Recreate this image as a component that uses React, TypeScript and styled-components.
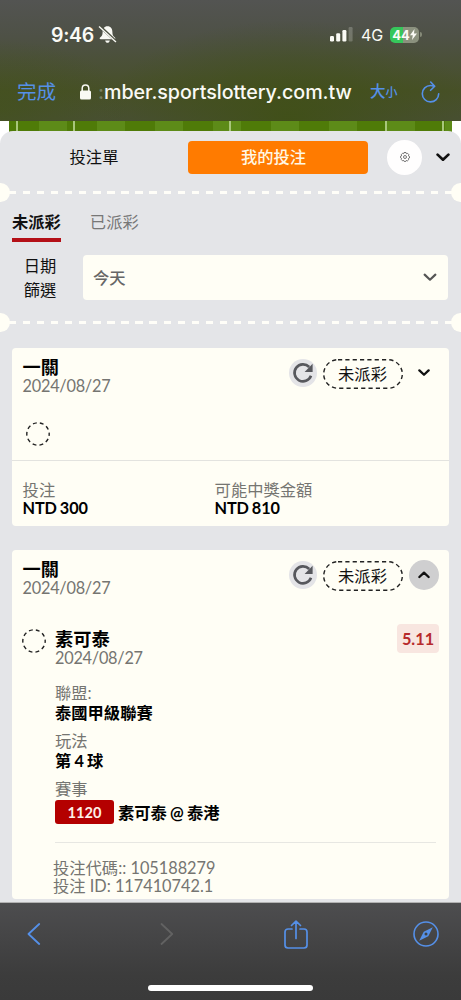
import React from "react";
import styled, { createGlobalStyle } from "styled-components";

const GlobalStyle = createGlobalStyle`
  * { box-sizing: border-box; }
  body { margin: 0; background: #e4e5e8; }
`;

const webFont = `Lato, "Noto Sans CJK TC", sans-serif`;
const systemFont = `Inter, "Noto Sans CJK TC", sans-serif`;

const Screen = styled.div`
  display: flex;
  flex-direction: column;
  width: 461px;
  height: 1000px;
  overflow: hidden;
  background: #e4e5e8;
  font-family: ${webFont};
  font-size: 16.3px;
  line-height: 20px;
  color: #111;
  white-space: nowrap;
  svg { display: block; flex: none; }
`;

/* Browser chrome */
const BrowserTop = styled.header`
  flex: none;
  height: 121px;
  font-family: ${systemFont};
  color: #fafaf5;
  background: radial-gradient(ellipse 190px 100px at 290px 120px, rgba(62, 80, 16, 0.75), transparent),
    radial-gradient(ellipse 130px 70px at 0 110px, rgba(66, 82, 24, 0.6), transparent),
    linear-gradient(#535452 0, #4e5146 30%, #475028 75%, #484f34 100%);
`;
const StatusBar = styled.div`
  display: flex;
  align-items: center;
  height: 69px;
  padding: 0 39px 0 51px;
`;
const Clock = styled.span`
  width: 47px;
  font-size: 19.5px;
  font-weight: 600;
  letter-spacing: -0.3px;
`;
const StatusIcons = styled.div`
  display: flex;
  align-items: center;
  margin-left: auto;
`;
const Network = styled.span`
  width: 29px;
  margin-left: 8px;
  font-size: 16px;
`;
const Battery = styled.div`
  display: flex;
  align-items: center;
  justify-content: center;
  width: 29px;
  height: 16px;
  border-radius: 5px;
  background: linear-gradient(90deg, #36c75b 45%, #8b917e 45%);
  font-size: 13px;
  font-weight: 700;
`;
const BatteryTip = styled.i`
  width: 2px;
  height: 5px;
  margin-left: 1px;
  border-radius: 0 2px 2px 0;
  background: #858a78;
`;
const AddressBar = styled.div`
  display: flex;
  align-items: center;
  height: 46px;
  padding: 0 21px 0 17px;
  color: #5590e8;
`;
const Done = styled.span`
  width: 63px;
  font-size: 19.5px;
`;
const Address = styled.span`
  width: 272px;
  margin-left: 7px;
  font-size: 19.7px;
  font-weight: 500;
  line-height: 26px;
  letter-spacing: -0.04px;
  color: #fafaf5;
`;
const Faded = styled.span`
  color: rgba(250, 250, 245, 0.28);
`;
const TextSize = styled.span`
  width: 51px;
  font-size: 15.5px;
  font-weight: 500;
  small { font-size: 12px; }
`;

/* Page */
const Pitch = styled.div`
  flex: none;
  height: 22px;
  margin-bottom: -12px;
  border: solid #fff;
  border-width: 0 9px;
  background: linear-gradient(90deg, transparent 7px, #a9c77c 7px 9px, transparent 9px 64px, #a9c77c 64px 66px, transparent 66px 220px, #a9c77c 220px 222px, transparent 222px 376px, #a9c77c 376px 378px, transparent 378px 433px, #a9c77c 433px 435px, transparent 435px),
    repeating-linear-gradient(90deg, #4f7b08 0 30px, #5d8b18 30px 58px);
`;
const Page = styled.main`
  position: relative;
  flex: none;
  height: 771px;
  overflow: hidden;
  border-radius: 13px 13px 0 0;
  background: #e4e5e8;
`;
const MainTabs = styled.nav`
  display: flex;
  align-items: center;
  height: 52px;
  padding-right: 11px;
`;
const MainTab = styled.div<{ $active?: boolean }>`
  width: ${(p) => (p.$active ? 180 : 188)}px;
  height: 33px;
  padding-right: ${(p) => (p.$active ? 9 : 0)}px;
  border-radius: 4px;
  line-height: 32px;
  text-align: center;
  font-weight: ${(p) => (p.$active ? 500 : 400)};
  color: ${(p) => (p.$active ? "#fff7e4" : "#111")};
  background: ${(p) => (p.$active ? "#ff7b00" : "transparent")};
`;
const RoundButton = styled.div<{ $size: number; $bg: string }>`
  display: flex;
  flex: none;
  align-items: center;
  justify-content: center;
  width: ${(p) => p.$size}px;
  height: ${(p) => p.$size}px;
  border-radius: 50%;
  background: ${(p) => p.$bg};
`;
const MainTabIcons = styled.div`
  display: flex;
  flex: 1;
  align-items: center;
  justify-content: space-between;
  padding-left: 19px;
`;
const TicketDivider = styled.div`
  display: flex;
  align-items: center;
  justify-content: space-between;
  height: 19px;
  background: repeating-linear-gradient(90deg, #fffef8 0 7.2px, transparent 7.2px 14.05px) 9px 8px / 443px 3px no-repeat;
`;
const Notch = styled.i<{ $side: "left" | "right" }>`
  width: 10px;
  height: 19px;
  border-radius: ${(p) => (p.$side === "left" ? "0 10px 10px 0" : "10px 0 0 10px")};
  background: #fffef5;
`;
const StatusTabs = styled.div`
  display: flex;
  gap: 29px;
  height: 40px;
  padding: 0 12px;
`;
const StatusTab = styled.span<{ $active?: boolean }>`
  height: 40px;
  padding-top: 10px;
  border-bottom: 4px solid ${(p) => (p.$active ? "#b41017" : "transparent")};
  font-weight: ${(p) => (p.$active ? 700 : 400)};
  color: ${(p) => (p.$active ? "#111" : "#777")};
`;
const FilterRow = styled.div`
  display: flex;
  align-items: center;
  height: 71px;
  padding: 0 13px 0 0;
`;
const FilterLabel = styled.div`
  width: 83px;
  padding-right: 3px;
  text-align: center;
  line-height: 23.5px;
`;
const Select = styled.div`
  display: flex;
  flex: 1;
  align-items: center;
  justify-content: space-between;
  height: 45px;
  padding: 0 11px 0 10px;
  border-radius: 4px;
  background: #fffef5;
  font-weight: 500;
  color: #666;
`;
const Cards = styled.div`
  display: flex;
  flex-direction: column;
  gap: 24px;
  padding: 16px 12px 0;
`;
const Card = styled.article<{ $height: number }>`
  height: ${(p) => p.$height}px;
  border-radius: 4px;
  background: #fffef5;
`;
const CardHead = styled.div`
  display: flex;
  height: 62px;
  padding: 9px 10px 0 10.6px;
`;
const Heading = styled.div`
  display: flex;
  flex: 1;
  flex-direction: column;
`;
const Title = styled.strong`
  font-size: 18.2px;
  line-height: 20px;
  color: #000;
`;
const Muted = styled.span`
  line-height: 19px;
  color: #757571;
`;
const EventDate = styled(Muted)`
  line-height: 18px;
  letter-spacing: -0.25px;
`;
const CardActions = styled.div`
  display: flex;
  align-items: center;
  height: 32px;
`;
const Pill = styled.div`
  display: grid;
  place-items: center;
  width: 80px;
  height: 30px;
  margin: 1px 6.5px 0 6px;
  > * { grid-area: 1 / 1; }
`;
const PendingRow = styled.div`
  height: 51px;
  padding: 12px 14px 0;
  border-bottom: 1px solid #e3e3df;
`;
const Amounts = styled.div`
  display: grid;
  grid-template-columns: 192px 1fr;
  padding: 19px 10.6px;
`;
const Field = styled.div<{ $gap?: number }>`
  display: flex;
  flex-direction: column;
  margin-bottom: ${(p) => p.$gap ?? 0}px;
`;
const Value = styled.strong<{ $line?: number }>`
  line-height: ${(p) => p.$line ?? 17}px;
  word-spacing: -0.8px;
  color: #000;
`;
const Amount = styled(Value)`
  letter-spacing: -0.15px;
`;
const Selection = styled.div`
  display: grid;
  grid-template-columns: 32px 1fr 42px;
  height: 71px;
  padding: 17px 10px 0 11px;
  svg { margin: 0 -1px; }
`;
const Odds = styled.strong`
  height: 29px;
  margin-top: -5px;
  border-radius: 4px;
  background: #f8e6e0;
  color: #b72a2b;
  line-height: 30px;
  text-align: center;
`;
const Details = styled.div`
  height: 160px;
  margin: 0 13px 0 43px;
  border-bottom: 1px solid #e7e7e2;
`;
const MatchRow = styled.div`
  display: flex;
  align-items: center;
  height: 28px;
  gap: 4px;
`;
const MatchCode = styled.strong`
  width: 59px;
  height: 24px;
  border-radius: 3px;
  background: #b40000;
  color: #fff0e8;
  font-size: 14.6px;
  line-height: 25px;
  text-align: center;
`;
const BetIds = styled.div`
  display: flex;
  flex-direction: column;
  padding: 16px 0 0 41px;
  ${Muted} { line-height: 18px; }
`;

const BrowserBottom = styled.footer`
  display: flex;
  flex: none;
  flex-direction: column;
  align-items: center;
  height: 98px;
  border-top: 1px solid #b2b2b2;
  background: linear-gradient(#4d4d4f 0, #444445 40%, #3c3c3c 75%, #3a3a3a 100%);
`;
const ToolRow = styled.div`
  display: grid;
  grid-template-columns: 133px 123.5px 129.5px 26px;
  align-items: center;
  width: 100%;
  height: 62px;
  padding-left: 27px;
`;
const HomeIndicator = styled.div`
  width: 165px;
  height: 6px;
  margin-top: 20px;
  border-radius: 3px;
  background: #fff;
`;

const Chevron = ({ width = 13, up = false, color = "#111", stroke = 2.5 }) => (
  <svg width={width} height={width * 0.62} viewBox="0 0 13 8" fill="none" stroke={color} strokeWidth={stroke} strokeLinecap="round" strokeLinejoin="round">
    <path d={up ? "M1.5 6.5 6.5 1.8l5 4.7" : "M1.5 1.5l5 4.7 5-4.7"} />
  </svg>
);

const DashedCircle = () => (
  <svg width="24" height="24" viewBox="0 0 24 24" fill="none" stroke="#222" strokeWidth="1.4">
    <circle cx="12" cy="12" r="11.2" strokeDasharray="3.9 3.14" strokeDashoffset="2" />
  </svg>
);

const CardControls = ({ open = false }) => (
  <CardActions>
    <RoundButton $size={28} $bg="#e4e4e7">
      <svg width="22" height="22" viewBox="0 0 22 22" fill="none">
        <path d="M17.2 5A8.5 8.5 0 1 0 19 13.8" stroke="#57585d" strokeWidth="2.6" />
        <path d="M20.6 1.8v8.1h-8z" fill="#57585d" />
      </svg>
    </RoundButton>
    <Pill>
      <svg width="80" height="30" viewBox="0 0 80 30" fill="none" stroke="#222" strokeWidth="1.4">
        <rect x=".7" y=".7" width="78.600" height="28.600" rx="14.300" strokeDasharray="4.200 3.130" />
      </svg>
      <span>未派彩</span>
    </Pill>
    <RoundButton $size={30} $bg={open ? "#cfcfd0" : "transparent"}>
      <Chevron width={12} up={open} />
    </RoundButton>
  </CardActions>
);

const Gear = () => (
  <svg width="10" height="10" viewBox="0 0 20 20" fill="none" stroke="#555" strokeWidth="1.6" strokeLinejoin="round">
    <path d="M8 1h4l.8 2.5 2.5-.8 2.5 2.8-1 2.2L19 9v3l-2.2 1 .5 2.5-2.5 2.3-2.3-1L11.5 19h-3l-1-2.2-2.5.8L2.5 15l.8-2.3L1 11.5v-3l2.3-.8-.8-2.5L5 2.8l2.3.7z" />
    <circle cx="10" cy="10" r="3" />
  </svg>
);

export default function App() {
  return (
    <Screen>
      <GlobalStyle />
      <BrowserTop>
        <StatusBar>
          <Clock>9:46</Clock>
          <svg width="19" height="19" viewBox="0 0 18 18">
            <path d="M9 1.2c-3.2 0-4.6 2.4-4.6 5.2 0 3.2-.8 4.2-2.4 5.5-.7.7-.5 1.7.5 1.7h13c1 0 1.2-1 .5-1.7-1.6-1.3-2.4-2.3-2.4-5.5 0-2.8-1.4-5.2-4.6-5.2zM6.8 14.6h4.4c-.3 1.7-1.2 2.2-2.2 2.2s-1.9-.5-2.2-2.2z" fill="#fafaf5" />
            <path d="M1.8 1.3 17.3 15.7" stroke="#4d5142" strokeWidth="2.6" />
            <path d="M1 1.4 17 16.2" stroke="#fafaf5" strokeWidth="1.3" />
          </svg>
          <StatusIcons>
            <svg width="23" height="15" viewBox="0 0 23 15" fill="#fafaf5">
              <rect x="0" y="9" width="4" height="5.5" rx="1.2" />
              <rect x="6.2" y="6.3" width="4" height="8.2" rx="1.2" />
              <rect x="12.4" y="3" width="4" height="11.5" rx="1.2" />
              <rect x="18.6" y="0" width="4" height="14.5" rx="1.2" opacity=".22" />
            </svg>
            <Network>4G</Network>
            <Battery>
              44
              <svg width="7" height="11" viewBox="0 0 7 11" fill="#fafaf5">
                <path d="M4.5 0 0 6.2h2.8L2 11l5-6.5H4z" />
              </svg>
            </Battery>
            <BatteryTip />
          </StatusIcons>
        </StatusBar>
        <AddressBar>
          <Done>完成</Done>
          <svg width="11" height="16" viewBox="0 0 11 16">
            <rect y="6.5" width="11" height="9" rx="1.6" fill="#fafaf5" />
            <path d="M2.2 7V4.4C2.2 2 3.6.9 5.5.9s3.3 1.1 3.3 3.5V7" fill="none" stroke="#fafaf5" strokeWidth="1.5" />
          </svg>
          <Address><Faded>:</Faded>mber.sportslottery.com.tw</Address>
          <TextSize>大<small>小</small></TextSize>
          <svg width="19" height="22" viewBox="0 0 19 22" fill="none" stroke="#5590e8" strokeWidth="1.6" strokeLinecap="round" strokeLinejoin="round">
            <path d="M12.8 5.2C11.7 4.7 10.6 4.5 9.5 4.5a8.2 8.2 0 1 0 8.2 8.3M9.7 1l4 4.3-4.1 4" />
          </svg>
        </AddressBar>
      </BrowserTop>
      <Pitch />
      <Page>
        <MainTabs>
          <MainTab>投注單</MainTab>
          <MainTab $active>我的投注</MainTab>
          <MainTabIcons>
            <RoundButton $size={35} $bg="#fffefe"><Gear /></RoundButton>
            <Chevron width={14} />
          </MainTabIcons>
        </MainTabs>
        <TicketDivider><Notch $side="left" /><Notch $side="right" /></TicketDivider>
        <StatusTabs>
          <StatusTab $active>未派彩</StatusTab>
          <StatusTab>已派彩</StatusTab>
        </StatusTabs>
        <FilterRow>
          <FilterLabel>日期<br />篩選</FilterLabel>
          <Select>今天<Chevron width={14} color="#555" stroke={2} /></Select>
        </FilterRow>
        <TicketDivider><Notch $side="left" /><Notch $side="right" /></TicketDivider>
        <Cards>
          <Card $height={178}>
            <CardHead>
              <Heading><Title>一關</Title><EventDate>2024/08/27</EventDate></Heading>
              <CardControls />
            </CardHead>
            <PendingRow><DashedCircle /></PendingRow>
            <Amounts>
              <Field><Muted>投注</Muted><Amount>NTD 300</Amount></Field>
              <Field><Muted>可能中獎金額</Muted><Amount>NTD 810</Amount></Field>
            </Amounts>
          </Card>
          <Card $height={349}>
            <CardHead>
              <Heading><Title>一關</Title><EventDate>2024/08/27</EventDate></Heading>
              <CardControls open />
            </CardHead>
            <Selection>
              <DashedCircle />
              <Heading><Title>素可泰</Title><EventDate>2024/08/27</EventDate></Heading>
              <Odds>5.11</Odds>
            </Selection>
            <Details>
              <Field $gap={8}><Muted>聯盟:</Muted><Value $line={21}>泰國甲級聯賽</Value></Field>
              <Field $gap={8}><Muted>玩法</Muted><Value $line={21}>第 4 球</Value></Field>
              <Field>
                <Muted>賽事</Muted>
                <MatchRow><MatchCode>1120</MatchCode><Value>素可泰 @ 泰港</Value></MatchRow>
              </Field>
            </Details>
            <BetIds>
              <Muted>投注代碼:: 105188279</Muted>
              <Muted>投注 ID: 117410742.1</Muted>
            </BetIds>
          </Card>
        </Cards>
      </Page>
      <BrowserBottom>
        <ToolRow>
          <svg width="14" height="22" viewBox="0 0 14 22" fill="none" stroke="#5590e8" strokeWidth="1.8" strokeLinecap="round" strokeLinejoin="round"><path d="M12.2 1 1.5 11l10.7 10" /></svg>
          <svg width="14" height="22" viewBox="0 0 14 22" fill="none" stroke="#626262" strokeWidth="1.8" strokeLinecap="round" strokeLinejoin="round"><path d="M1.5 1l10.7 10L1.5 21" /></svg>
          <svg width="24" height="29" viewBox="0 0 24 29" fill="none" stroke="#5590e8" strokeWidth="1.7" strokeLinecap="round" strokeLinejoin="round"><path d="M8 9H4a3 3 0 0 0-3 3v13a3 3 0 0 0 3 3h16a3 3 0 0 0 3-3V12a3 3 0 0 0-3-3h-4M12 18.5V1.2M7.5 5.5 12 1.2l4.5 4.3" /></svg>
          <svg width="26" height="26" viewBox="0 0 26 26" fill="none"><circle cx="13" cy="13" r="12" stroke="#5590e8" strokeWidth="1.6" /><path d="M19.8 6.2 15.3 15.3 6.2 19.8 10.7 10.7z" fill="#5590e8" /><circle cx="13" cy="13" r="1.5" fill="#3e4248" /></svg>
        </ToolRow>
        <HomeIndicator />
      </BrowserBottom>
    </Screen>
  );
}
